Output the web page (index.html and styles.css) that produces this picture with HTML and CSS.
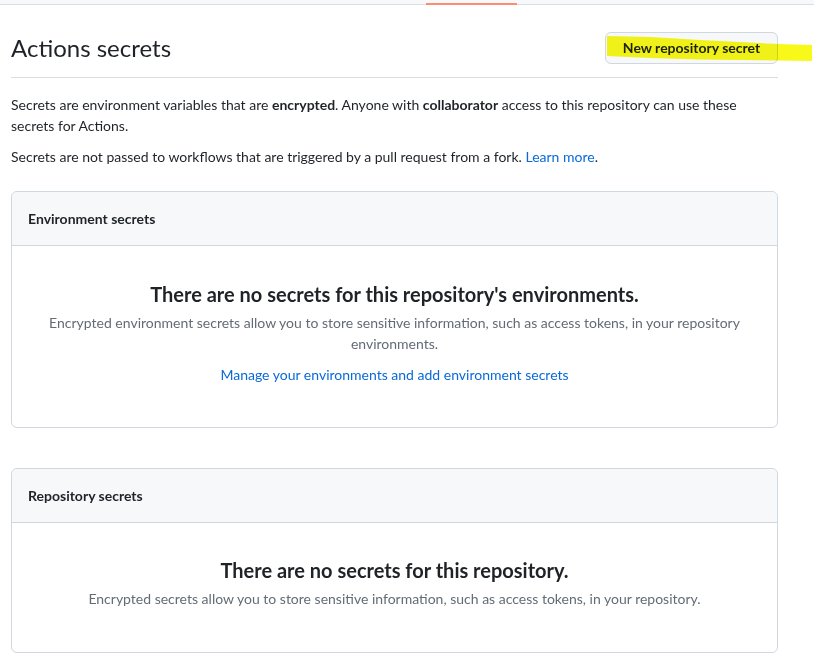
FILE: index.html
```html
<!DOCTYPE html>
<html lang="en">
<head>
<meta charset="utf-8">
<title>Actions secrets</title>
<link rel="stylesheet" href="styles.css">
</head>
<body>
<div class="topbar"><span class="tab-underline"></span></div>
<main class="page">
  <div class="subhead">
    <h2 class="subhead-title">Actions secrets</h2>
    <a class="btn" href="#">New repository secret</a>
    <svg class="marker" width="814" height="80" viewBox="0 0 814 80" aria-hidden="true">
      <polygon points="607,36 650,37 700,40 778,44 812,45 812,61 740,60 700,59.5 650,58 607,56" fill="#f7f700" opacity="0.9"/>
    </svg>
  </div>
  <p class="note">Secrets are environment variables that are <strong>encrypted</strong>. Anyone with <strong>collaborator</strong> access to this repository can use these secrets for Actions.</p>
  <p class="note second">Secrets are not passed to workflows that are triggered by a pull request from a fork. <a href="#">Learn more</a>.</p>

  <section class="box">
    <div class="box-header">Environment secrets</div>
    <div class="blankslate">
      <h3 class="blank-title">There are no secrets for this repository's environments.</h3>
      <p class="blank-desc">Encrypted environment secrets allow you to store sensitive information, such as access tokens, in your repository environments.</p>
      <a class="blank-link" href="#">Manage your environments and add environment secrets</a>
    </div>
  </section>

  <section class="box box-second">
    <div class="box-header">Repository secrets</div>
    <div class="blankslate short">
      <h3 class="blank-title">There are no secrets for this repository.</h3>
      <p class="blank-desc">Encrypted secrets allow you to store sensitive information, such as access tokens, in your repository.</p>
    </div>
  </section>
</main>
</body>
</html>
```
FILE: styles.css
```css
* { box-sizing: border-box; }
html, body { margin: 0; padding: 0; background: #ffffff; }
body {
  font-family: Lato, "Noto Sans", "Liberation Sans", sans-serif;
  font-size: 14px;
  line-height: 21px;
  color: #1f2328;
}
.topbar {
  height: 5px;
  background: #f6f8fa;
  border-bottom: 1px solid #d8dee4;
  position: relative;
}
.tab-underline {
  position: absolute;
  left: 426px;
  top: 3px;
  width: 91px;
  height: 2px;
  background: #fd8c73;
}
.page {
  width: 767px;
  margin-left: 11px;
}
.subhead {
  display: flex;
  align-items: center;
  justify-content: space-between;
  padding-top: 27px;
  padding-bottom: 13px;
  border-bottom: 1px solid #d8dee4;
  position: relative;
}
.subhead-title {
  margin: 0;
  font-size: 24px;
  font-weight: 400;
  line-height: 32px;
}
.btn {
  display: inline-block;
  height: 32px;
  width: 173px;
  text-align: center;
  line-height: 30px;
  border: 1px solid #d0d7de;
  border-radius: 6px;
  background: #f6f8fa;
  color: #1f2328;
  font-weight: 700;
  font-size: 14px;
  text-decoration: none;
  position: relative;
  z-index: 1;
}
.marker {
  position: absolute;
  left: -11px;
  top: -5px;
  z-index: 2;
  pointer-events: none;
  mix-blend-mode: multiply;
}
.note {
  margin: 16px 0 0;
}
.note.second { margin-top: 10px; }
.note a { color: #0969da; text-decoration: none; }
.box {
  margin-top: 24px;
  border: 1px solid #d0d7de;
  border-radius: 6px;
}
.box-second { margin-top: 40px; }
.box-header {
  padding: 16px;
  background: #f6f8fa;
  border-bottom: 1px solid #d0d7de;
  border-radius: 6px 6px 0 0;
  font-weight: 700;
  font-size: 14px;
  line-height: 21px;
}
.blankslate {
  text-align: center;
  padding: 33px 32px 42px;
}
.blankslate.short { padding: 32px 32px 43px; }
.blank-title {
  margin: 0;
  font-size: 20px;
  font-weight: 700;
  line-height: 30px;
}
.blank-desc {
  margin: 3px 0 0;
  color: #636c76;
}
.blank-link {
  display: inline-block;
  margin-top: 10px;
  color: #0969da;
  text-decoration: none;
}
```
